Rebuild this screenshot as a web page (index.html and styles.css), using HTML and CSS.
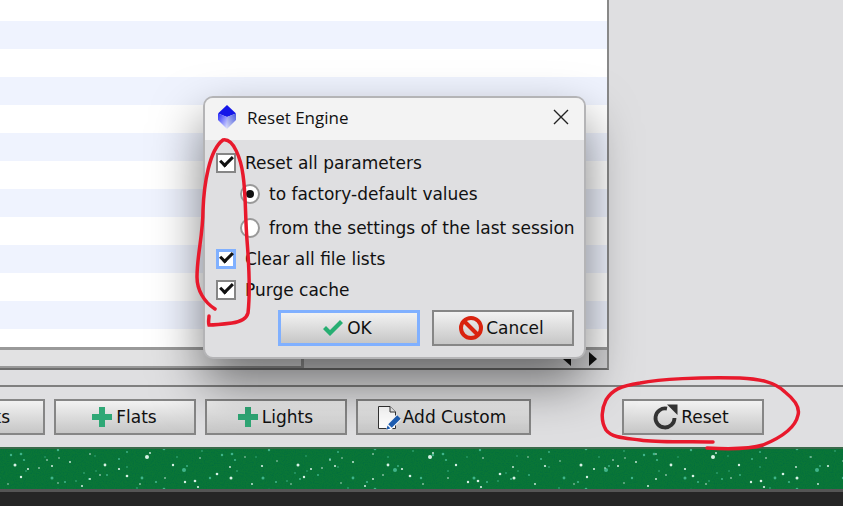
FILE: index.html
```html
<!DOCTYPE html>
<html>

<head>
    <title>Reset Engine</title>
    <link rel="stylesheet" href="styles.css">
</head>

<body>
    <div class="window">
        <div class="top">
            <div class="list-panel">
                <div class="file-list">
                    <div class="row"></div><div class="row"></div><div class="row"></div><div class="row"></div>
                    <div class="row"></div><div class="row"></div><div class="row"></div><div class="row"></div>
                    <div class="row"></div><div class="row"></div><div class="row"></div><div class="row"></div>
                    <div class="row"></div>
                </div>
                <div class="hscroll">
                    <div class="thumb"></div>
                    <div class="track">
                        <span class="arrow-left"></span>
                        <span class="arrow-right"></span>
                    </div>
                </div>
            </div>
            <div class="side-panel"></div>
        </div>
        <div class="strip"></div>
        <div class="button-bar">
            <button class="btn btn-cut">
                <svg class="plus" viewBox="0 0 20 20"><path d="M7 0h6v7h7v6h-7v7H7v-7H0V7h7z"/></svg>Darks
            </button>
            <button class="btn">
                <svg class="plus" viewBox="0 0 20 20"><path d="M7 0h6v7h7v6h-7v7H7v-7H0V7h7z"/></svg>Flats
            </button>
            <button class="btn">
                <svg class="plus" viewBox="0 0 20 20"><path d="M7 0h6v7h7v6h-7v7H7v-7H0V7h7z"/></svg>Lights
            </button>
            <button class="btn btn-wide">
                <svg class="doc" viewBox="0 0 26 25">
                    <path d="M1.500 1.500H13L18.500 7v16.500H1.500z" fill="#fff" stroke="#333" stroke-width="1"/>
                    <path d="M13 1.500V7h5.500" fill="#eee" stroke="#333" stroke-width="1"/>
                    <path d="M10 24l12-12" stroke="#fff" stroke-width="7"/>
                    <path d="M13 21l9-9" stroke="#1f5fb4" stroke-width="5"/>
                    <path d="M9.500 24.500l1-4 3 3z" fill="#1f5fb4"/>
                </svg>Add Custom
            </button>
            <button class="btn btn-reset">
                <svg class="reset-icon" viewBox="0 0 26 26">
                    <path d="M14 4.700A9.500 9.500 0 1 0 21.500 14" fill="none" stroke="#333" stroke-width="3.800"/>
                    <path d="M14 .5h10.500V11z" fill="#333"/>
                </svg>Reset
            </button>
        </div>
    </div>

    <svg class="starfield" viewBox="0 0 843 40" preserveAspectRatio="none">
        <defs>
            <g id="star-tile">
                <circle cx="15" cy="16" r="1.500"/><circle cx="28" cy="20" r="1"/><circle cx="21" cy="28" r="1.200"/>
                <circle cx="39" cy="19" r=".800"/><circle cx="47" cy="11" r=".800"/><circle cx="52" cy="17" r="1"/>
                <circle cx="59" cy="9" r=".700"/><circle cx="70" cy="13" r=".900"/><circle cx="105" cy="16" r="1.400"/>
                <circle cx="90" cy="5" r=".800"/><circle cx="119" cy="20" r="1.100"/><circle cx="127" cy="27" r="1.300"/>
                <circle cx="100" cy="26" r=".800"/><circle cx="90" cy="30" r=".900"/><circle cx="147" cy="8" r="2"/>
                <circle cx="150" cy="4" r=".900"/><circle cx="173" cy="16" r="1.200"/><circle cx="165" cy="29" r=".800"/>
                <circle cx="185" cy="33" r="1.200"/><circle cx="195" cy="32" r="1.300"/><circle cx="200" cy="9" r=".800"/>
                <circle cx="217" cy="25" r="1.300"/><circle cx="231" cy="29" r="1.500"/><circle cx="230" cy="18" r=".900"/>
                <circle cx="245" cy="8" r=".700"/><circle cx="262" cy="17" r="1.100"/><circle cx="252" cy="35" r=".900"/>
                <circle cx="82" cy="37" r="1"/><circle cx="198" cy="38" r="1.100"/><circle cx="277" cy="12" r=".700"/>
                <circle cx="8" cy="35" r=".700"/><circle cx="58" cy="34" r=".700"/><circle cx="140" cy="35" r=".800"/>
            </g>
            <pattern id="stars" width="283" height="40" patternUnits="userSpaceOnUse">
                <use href="#star-tile" fill="#d8f2e6"/>
            </pattern>
            <pattern id="stars-dim" width="211" height="40" patternUnits="userSpaceOnUse" patternTransform="translate(37 13)">
                <use href="#star-tile" fill="#3fb48a"/>
            </pattern>
            <filter id="grain">
                <feTurbulence type="fractalNoise" baseFrequency="0.9" numOctaves="2"/>
                <feColorMatrix values="0 0 0 0 0  0 0 0 0 0.15  0 0 0 0 0.05  0 0 0 1.600 -0.600"/>
            </filter>
        </defs>
        <rect width="843" height="40" fill="#0a7636"/>
        <rect width="843" height="40" filter="url(#grain)"/>
        <rect width="843" height="40" fill="url(#stars-dim)"/>
        <rect width="843" height="40" fill="url(#stars)"/>
    </svg>
    <div class="taskbar"></div>

    <div class="dialog">
        <div class="dialog-title">
            <svg class="cube" viewBox="0 0 18 24">
                <defs>
                    <linearGradient id="cube-left" x1="0" y1="0" x2="1" y2="1">
                        <stop offset="0" stop-color="#2a2cf8"/>
                        <stop offset="1" stop-color="#dfe4ff"/>
                    </linearGradient>
                    <linearGradient id="cube-right" x1="1" y1="0" x2="0" y2="1">
                        <stop offset="0" stop-color="#4a5ae0"/>
                        <stop offset="1" stop-color="#d8dcf4"/>
                    </linearGradient>
                </defs>
                <path d="M9 0l9 8.500L9 12 0 8.500z" fill="#1416e8"/>
                <path d="M0 8.500L9 12v12l-9-9z" fill="url(#cube-left)"/>
                <path d="M18 8.500L9 12v12l9-9z" fill="url(#cube-right)"/>
            </svg>
            <span class="title-text">Reset Engine</span>
            <svg class="close" viewBox="0 0 16 16"><path d="M1 1l14 14M15 1L1 15" stroke="#222" stroke-width="1.400"/></svg>
        </div>
        <div class="dialog-body">
            <div class="option"><span class="check"></span>Reset all parameters</div>
            <div class="option option-sub"><span class="radio radio-on"></span>to factory-default values</div>
            <div class="option option-sub option-gap"><span class="radio"></span>from the settings of the last session</div>
            <div class="option"><span class="check check-focus"></span>Clear all file lists</div>
            <div class="option"><span class="check"></span>Purge cache</div>
            <div class="dialog-buttons">
                <button class="btn btn-default">
                    <svg class="ok-icon" viewBox="0 0 21 16"><path d="M1 9l3-3 4 4L18 0l3 3L8 16z"/></svg>OK
                </button>
                <button class="btn">
                    <svg class="cancel-icon" viewBox="0 0 24 24">
                        <circle cx="12" cy="12" r="10" fill="none" stroke="#d9230f" stroke-width="4"/>
                        <path d="M5 5l14 14" stroke="#d9230f" stroke-width="4"/>
                    </svg>Cancel
                </button>
            </div>
        </div>
    </div>

    <svg class="scribble" viewBox="0 0 843 506">
        <path d="M215 309C204 302 197 290 197 277C197 255 203 235 203 210C204 185 209 150 223 140C234 138 241 160 243 175C246 195 245 215 247 240C249 265 250 295 248 313C246 320 240 322 232 323C224 324 216 325 209 325C208 322 209 319 209 316"/>
        <path d="M713 442C690 441 660 443 640 440C625 438 612 438 606 430C600 420 602 408 606 400C612 390 620 386 640 383C660 379 700 377 740 378C760 379 775 382 785 392C795 400 800 408 798 415C796 425 785 436 763 445C750 449 725 449 707 448"/>
    </svg>
</body>

</html>
```

FILE: styles.css
```css
html,
body {
    margin: 0;
    height: 506px;
    overflow: hidden;
    background-color: #dfdfe1;
    font-family: "DejaVu Sans", sans-serif;
    font-size: 17px;
    color: #111;
}

.window {
    height: 447px;
    background-color: #dfdfe1;
}

.top {
    display: flex;
    height: 370px;
}

.list-panel {
    width: 607px;
    height: 368px;
    border-right: 2px solid #888;
    border-bottom: 2px solid #6e6e6e;
}

.side-panel {
    flex: 1;
}

.file-list {
    height: 347px;
    overflow: hidden;
    background-color: #fff;
    border-bottom: 3px solid #999;
}

.row {
    height: 28px;
}

.row:first-child {
    margin-top: -7px;
}

.row:nth-child(even) {
    background-color: #eff3fe;
}

.hscroll {
    display: flex;
    height: 18px;
}

.thumb {
    width: 304px;
    background-color: #e2e2e3;
    border-right: 3px solid #999;
    border-bottom: 2px solid #999;
    box-sizing: border-box;
}

.track {
    flex: 1;
    display: flex;
    align-items: center;
    justify-content: flex-end;
    gap: 18px;
    padding-right: 10px;
    background-color: #d0d0d2;
}

.arrow-left {
    width: 0;
    height: 0;
    border-top: 7px solid transparent;
    border-bottom: 7px solid transparent;
    border-right: 8px solid #111;
}

.arrow-right {
    width: 0;
    height: 0;
    border-top: 7px solid transparent;
    border-bottom: 7px solid transparent;
    border-left: 8px solid #111;
}

.strip {
    height: 15px;
    border-bottom: 2px solid #808080;
}

.button-bar {
    display: flex;
    gap: 9px;
    padding-top: 12px;
}

.btn {
    display: flex;
    align-items: center;
    justify-content: center;
    width: 142px;
    height: 36px;
    padding: 0;
    border: 2px solid #868686;
    background: linear-gradient(#f2f2f2, #c6c6c6);
    font-family: "DejaVu Sans", sans-serif;
    font-size: 17px;
    color: #111;
}

.btn-cut {
    margin-left: -97px;
}

.btn-wide {
    width: 175px;
}

.btn-reset {
    margin-left: 82px;
}

.btn-default {
    border: 3px solid #80b0ff;
}

.plus {
    width: 20px;
    height: 20px;
    margin: 0 4px 0 -1px;
    fill: #2fa876;
}

.doc {
    width: 26px;
    height: 25px;
    margin-left: -4px;
    flex-shrink: 0;
}

.reset-icon {
    width: 26px;
    height: 26px;
    margin: 0 2px 0 -4px;
    flex-shrink: 0;
}

.ok-icon {
    width: 21px;
    height: 16px;
    margin: 0 4px 0 -4px;
    fill: #27ae72;
}

.cancel-icon {
    width: 24px;
    height: 24px;
    margin: 0 3px 0 -3px;
    flex-shrink: 0;
}

.starfield {
    display: block;
    width: 843px;
    height: 45px;
    border-top: 2px solid #3a6a4a;
    border-bottom: 3px solid #555;
    box-sizing: border-box;
}

.taskbar {
    height: 14px;
    background-color: #262626;
}

.dialog {
    position: absolute;
    left: 203px;
    top: 96px;
    width: 383px;
    height: 263px;
    box-sizing: border-box;
    border: 2px solid #b4b4b6;
    border-radius: 10px;
    background-color: #dfdfe1;
    box-shadow: 0 24px 50px rgba(0, 0, 0, 0.5);
    overflow: hidden;
}

.dialog-title {
    display: flex;
    align-items: center;
    height: 38px;
    padding: 0 15px 4px 13px;
    background-color: #f3f3f3;
    font-family: "Open Sans", sans-serif;
    font-size: 17px;
}

.cube {
    width: 18px;
    height: 24px;
}

.title-text {
    flex: 1;
    margin-left: 11px;
}

.close {
    width: 16px;
    height: 16px;
}

.dialog-body {
    padding: 7px 0 0 11px;
}

.option {
    display: flex;
    align-items: center;
    height: 31px;
}

.option-sub {
    padding-left: 24px;
}

.option-gap {
    margin-top: 3px;
}

.check {
    position: relative;
    width: 20px;
    height: 20px;
    margin-right: 9px;
    box-sizing: border-box;
    border: 2px solid #868686;
    background-color: #fff;
}

.check::after {
    content: "";
    position: absolute;
    left: 2px;
    top: 1px;
    width: 10px;
    height: 5px;
    border-left: 3px solid #111;
    border-bottom: 3px solid #111;
    transform: rotate(-45deg);
}

.check-focus {
    border: 3px solid #80b0ff;
}

.check-focus::after {
    left: 1px;
    top: 0;
}

.radio {
    position: relative;
    width: 20px;
    height: 20px;
    margin-right: 9px;
    box-sizing: border-box;
    border: 2px solid #999;
    border-radius: 50%;
    background-color: #fff;
}

.radio-on::after {
    content: "";
    position: absolute;
    left: 4px;
    top: 4px;
    width: 8px;
    height: 8px;
    border-radius: 50%;
    background-color: #111;
}

.dialog-buttons {
    display: flex;
    gap: 12px;
    margin: 5px 0 0 62px;
}

.scribble {
    position: absolute;
    left: 0;
    top: 0;
    width: 843px;
    height: 506px;
    fill: none;
    stroke: #e8192c;
    stroke-width: 3.500;
    stroke-linecap: round;
}
```
